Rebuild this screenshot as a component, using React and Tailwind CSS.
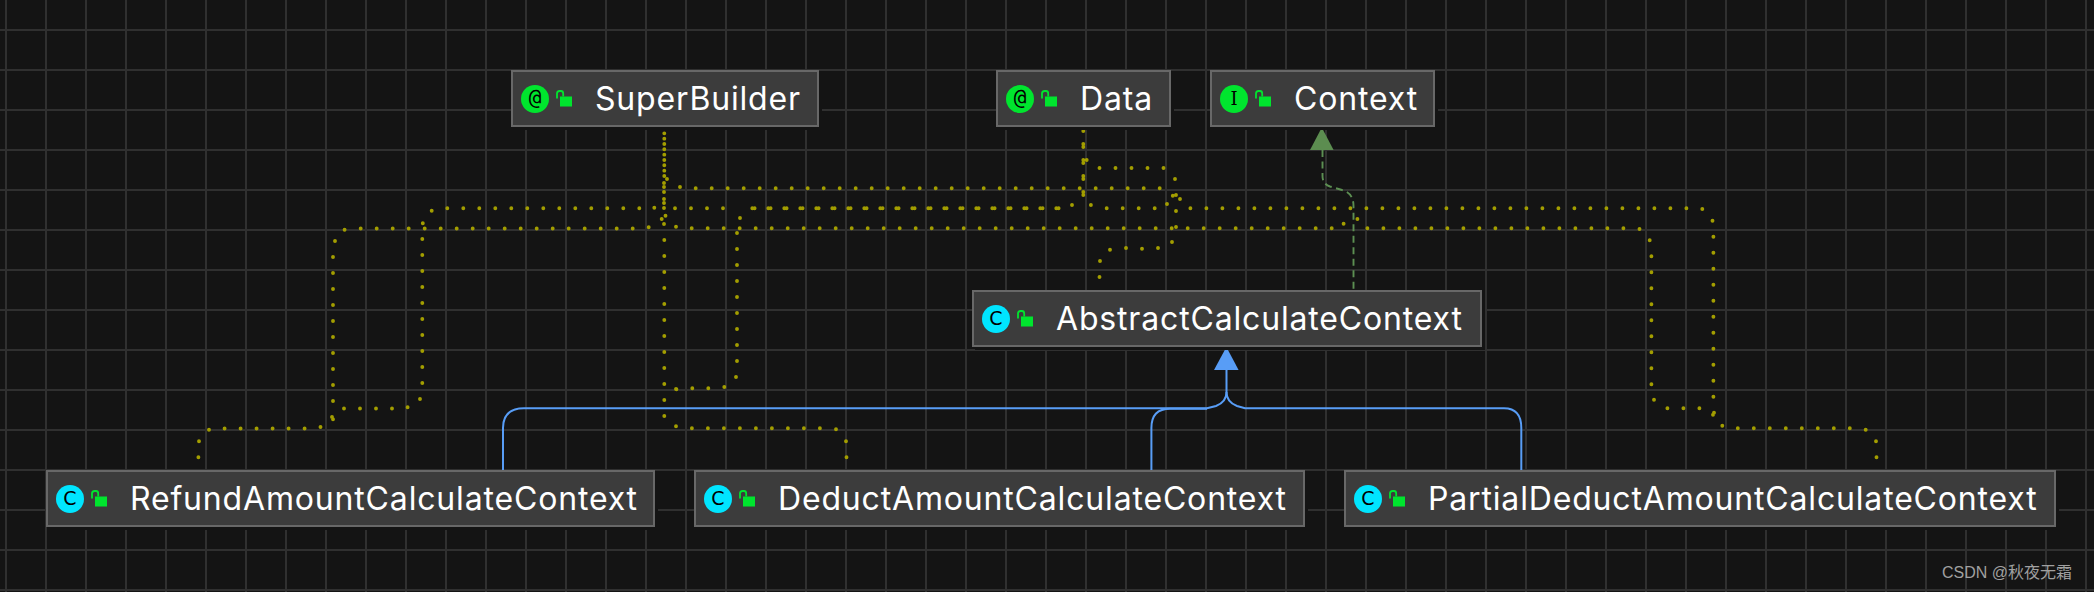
const FONT = "font-['Inter','Liberation_Sans',sans-serif]";

const runs = [
  // y=228 line
  [360.7, 228.5, 633, 228.5], [691.7, 228.3, 1332, 228.3], [1367.4, 228.3, 1624, 228.3],
  // y=208 line
  [447.3, 208.3, 640, 208.3], [675, 208.3, 739, 208.3], [752.3, 208.3, 1057, 208.3], [754.6, 208.3, 1059, 208.3],
  [1106.7, 208.3, 1155, 208.3], [1190.4, 208.3, 1687, 208.3],
  // y=188, y=168
  [695.7, 188.3, 1160, 188.3], [1099.5, 168, 1164, 168],
  // left verticals
  [333, 257, 333, 402], [422.3, 239, 422.3, 384],
  // left bottom
  [224.6, 428.5, 306, 428.5], [344, 408.5, 393, 408.5],
  // SuperBuilder down
  [664.3, 240, 664.3, 417],
  [737, 233, 737, 362],
  // Deduct
  [691.9, 428.3, 820, 428.3], [692.3, 388.3, 709, 388.3],
  // right
  [1651.4, 256.3, 1651.4, 385], [1713.4, 236.7, 1713.4, 397], [1667.4, 408.3, 1700, 408.3],
  [1737.8, 428.3, 1851, 428.3],
  // Data stem
  [1083.3, 128, 1083.3, 193], [1083.3, 131, 1083.3, 196],
];

const dots = [
  [344.6, 229.7], [648.7, 227.3], [661.7, 219], [664, 224], [665.5, 215.7], [676, 226.7], [1639.5, 229],
  [1343.6, 223.7], [1357.4, 219], [431.7, 210.7], [422.8, 223.3], [654.3, 207.7], [664, 183], [664, 187], [664, 192],
  [664, 199], [664, 203], [664, 208], [667, 179], [680, 187], [740, 218],
  [1072, 205], [1090.9, 205], [1086.7, 160], [1172.8, 195.7], [1176, 195], [1180, 199], [1175, 179], [1167, 204],
  [1176, 211], [1176, 227], [1172, 242], [1158, 248], [1142, 248.7], [1126, 248], [1110, 249.7], [1100, 261], [1099.5, 277],
  [335, 241], [332, 417], [333, 419.3], [320.5, 427], [209, 429.7], [199, 441.3], [198.4, 457.3],
  [407.6, 407.3], [420, 399], [846, 441.3], [846.5, 457.3], [836, 429.3], [676, 426.3], [676.4, 389.3], [724.3, 387], [736, 377],
  [676, 389], [1649.7, 240.3], [1654, 399.7], [1713, 414.7], [1714, 412.7], [1712.5, 220.7], [1702.3, 209], [1722.3, 425.7],
  [1865.7, 429.7], [1876, 441.3], [1876.5, 457.3],
];

const dotPath =
  runs.map(([a, b, c, d]) => `M${a} ${b}L${c} ${d}`).join("") +
  dots.map(([a, b]) => `M${a} ${b}h.01`).join("");

function Connectors() {
  return (
    <svg className="absolute inset-0" width="2094" height="592" viewBox="0 0 2094 592" fill="none">
      <path d={dotPath} stroke="#a39e00" strokeWidth="3.9" strokeLinecap="round" strokeDasharray="0 16" />
      <path d="M664.3 128V177" stroke="#a39e00" strokeWidth="3.9" strokeLinecap="round" strokeDasharray="0 5.33" />
      <path d="M1322.5 150V176Q1322.5 184 1330 186.5L1342 190Q1353.5 193 1353.5 206V290" stroke="#5c8f52" strokeWidth="1.9" strokeDasharray="7 4.5" />
      <path d="M1310 150L1321.8 127.5L1333.6 150Z" fill="#5c8d50" />
      <path d="M1226.5 368V392Q1226.5 402 1216 406L1207 408.3H524Q503 408.3 503 428V470" stroke="#589df6" strokeWidth="2" />
      <path d="M1226.5 392Q1226.5 402 1237 406L1245 408.3H1504Q1521.3 408.3 1521.3 428V470" stroke="#589df6" strokeWidth="2" />
      <path d="M1207 408.8H1170Q1151.4 408.8 1151.4 428V470" stroke="#589df6" strokeWidth="2" />
      <path d="M1214 370L1226.4 347L1238.6 370Z" fill="#589df6" />
    </svg>
  );
}

function Lock() {
  return (
    <svg width="17" height="17" viewBox="0 0 17 17" fill="none" className="ml-[7px] -mt-[0.5px]">
      <rect x="4" y="6.5" width="12" height="10" fill="#00e52e" />
      <path d="M1 8.5V3.5Q1 1 3.5 1H5Q7.2 1 7.2 3.5V6.5" stroke="#00e52e" strokeWidth="1.8" />
    </svg>
  );
}

function Node({ pos, glyph, circle, glyphCls, children }) {
  return (
    <div className={`absolute ${pos} h-[57px] flex items-center pl-2 bg-[#3c3c3c] border-2 border-[#686868] shadow-[3px_3px_0_#141414]`}>
      <div className={`w-7 h-7 rounded-full flex items-center justify-center text-black leading-none ${circle} ${glyphCls}`}>{glyph}</div>
      <Lock />
      <span className={`ml-[22px] text-white whitespace-nowrap text-[32px] leading-none tracking-[0.026em] ${FONT}`}>{children}</span>
    </div>
  );
}

const AT = "font-['DejaVu_Sans_Mono',monospace] text-[21px]";
const GC = "font-['DejaVu_Sans',sans-serif] text-[19px] font-medium";
const GI = "font-['DejaVu_Serif',serif] text-[18px]";

export default function App() {
  return (
    <div className="relative w-[2094px] h-[592px] overflow-hidden bg-[#141414] bg-[linear-gradient(#303030_2px,transparent_2px),linear-gradient(90deg,#303030_2px,transparent_2px)] bg-[size:40px_40px] bg-[position:5px_29px]">
      <Connectors />
      <Node pos="left-[511px] top-[70px] w-[308px]" glyph="@" circle="bg-[#00e52e]" glyphCls={AT}>SuperBuilder</Node>
      <Node pos="left-[996px] top-[70px] w-[175px]" glyph="@" circle="bg-[#00e52e]" glyphCls={AT}>Data</Node>
      <Node pos="left-[1210px] top-[70px] w-[225px]" glyph="I" circle="bg-[#00e52e]" glyphCls={GI}>Context</Node>
      <Node pos="left-[972px] top-[290px] w-[510px]" glyph="C" circle="bg-[#00e5ff]" glyphCls={GC}>AbstractCalculateContext</Node>
      <Node pos="left-[46px] top-[470px] w-[609px]" glyph="C" circle="bg-[#00e5ff]" glyphCls={GC}>RefundAmountCalculateContext</Node>
      <Node pos="left-[694px] top-[470px] w-[611px]" glyph="C" circle="bg-[#00e5ff]" glyphCls={GC}>DeductAmountCalculateContext</Node>
      <Node pos="left-[1344px] top-[470px] w-[712px]" glyph="C" circle="bg-[#00e5ff]" glyphCls={GC}>PartialDeductAmountCalculateContext</Node>
      <div className="absolute left-[1942px] top-[561px] text-[16px] leading-6 text-[#a0a0a0] whitespace-nowrap font-['Liberation_Sans','Noto_Sans_CJK_SC',sans-serif]">CSDN @秋夜无霜</div>
    </div>
  );
}
